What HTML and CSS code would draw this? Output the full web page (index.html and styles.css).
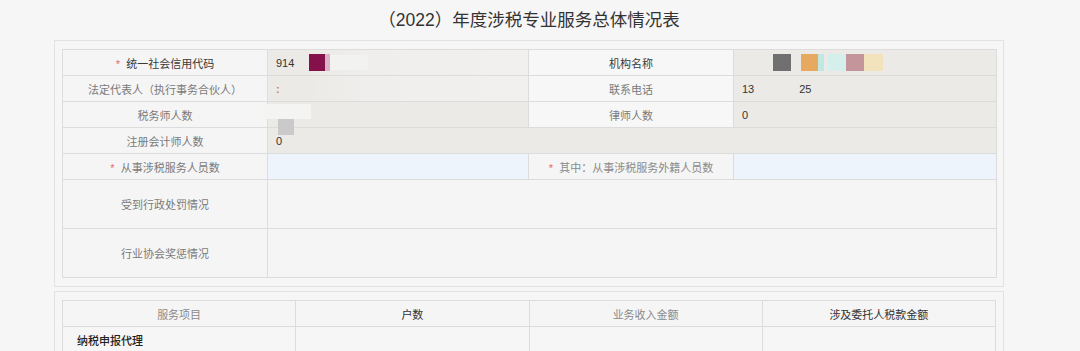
FILE: index.html
```html
<!DOCTYPE html>
<html lang="zh-CN">
<head>
<meta charset="utf-8">
<title>(2022) 年度涉税专业服务总体情况表</title>
<link rel="stylesheet" href="styles.css">
</head>
<body>
<div class="page">
  <h1 class="title">（2022）年度涉税专业服务总体情况表</h1>

  <div class="panel">
    <table class="form">
      <colgroup>
        <col class="c-label"><col class="c-val"><col class="c-label"><col class="c-val2">
      </colgroup>
      <tr class="r-s">
        <td class="lbl dark"><span class="req">*</span>统一社会信用代码</td>
        <td class="val light-a"><span class="num">914</span><span class="blk magenta"></span><span class="blk pinkstripe"></span><span class="blk whiteblur"></span></td>
        <td class="lbl lbl-w dark">机构名称</td>
        <td class="val"><span class="blk b-gray"></span><span class="blk b-orange"></span><span class="blk b-cyan"></span><span class="blk b-lcyan"></span><span class="blk b-pink"></span><span class="blk b-beige"></span></td>
      </tr>
      <tr class="r-s">
        <td class="lbl">法定代表人（执行事务合伙人）</td>
        <td class="val light-a"><span class="colon">:</span></td>
        <td class="lbl lbl-w">联系电话</td>
        <td class="val"><span class="num">13</span><span class="num gap">25</span></td>
      </tr>
      <tr class="r-s">
        <td class="lbl">税务师人数</td>
        <td class="val over"><span class="patch"></span><span class="graymark"></span></td>
        <td class="lbl lbl-w">律师人数</td>
        <td class="val"><span class="num">0</span></td>
      </tr>
      <tr class="r-s">
        <td class="lbl">注册会计师人数</td>
        <td class="val" colspan="3"><span class="num">0</span></td>
      </tr>
      <tr class="r-s">
        <td class="lbl"><span class="req">*</span>从事涉税服务人员数</td>
        <td class="inp"></td>
        <td class="lbl lbl-l"><span class="req">*</span>其中：从事涉税服务外籍人员数</td>
        <td class="inp"></td>
      </tr>
      <tr class="r-l">
        <td class="lbl">受到行政处罚情况</td>
        <td class="area" colspan="3"></td>
      </tr>
      <tr class="r-l">
        <td class="lbl">行业协会奖惩情况</td>
        <td class="area" colspan="3"></td>
      </tr>
    </table>
  </div>

  <div class="panel panel2">
    <table class="svc">
      <tr class="r-s">
        <th class="h-light">服务项目</th>
        <th class="h-dark">户数</th>
        <th class="h-light">业务收入金额</th>
        <th class="h-dark">涉及委托人税款金额</th>
      </tr>
      <tr class="r-s">
        <td class="item">纳税申报代理</td>
        <td></td>
        <td></td>
        <td></td>
      </tr>
    </table>
  </div>
</div>
</body>
</html>
```

FILE: styles.css
```css
html, body {
  margin: 0;
  padding: 0;
  background: #f6f6f6;
}

body {
  font-family: "Liberation Sans", "Noto Sans CJK SC", sans-serif;
  color: #333;
  overflow: hidden;
}

.page {
  width: 950px;
  margin-left: 54px;
}

.title {
  margin: 0;
  height: 40px;
  line-height: 40px;
  font-size: 17.5px;
  font-weight: normal;
  color: #333;
  text-align: center;
}

.panel {
  border: 1px solid #e2e2e2;
  padding: 8px 7px;
  background: #f6f6f6;
}

.panel2 {
  margin-top: 4px;
}

table {
  border-collapse: collapse;
  table-layout: fixed;
  width: 934px;
}

td, th {
  border: 1px solid #dcdcdc;
  padding: 0;
  font-size: 11px;
  font-weight: normal;
  white-space: nowrap;
  overflow: hidden;
}

.c-label { width: 205px; }
.c-val { width: 261px; }
.c-val2 { width: 263px; }

.r-s { height: 26px; }
.r-l { height: 49px; }

.lbl {
  text-align: center;
  color: #7a7a7a;
  background: #f5f5f5;
}

.lbl-w {
  background: #f7f7f7;
}

.lbl-l {
  color: #8a8a8a;
}

.dark {
  color: #3a3a3a;
}

.req {
  color: #e46a6a;
  margin-right: 6px;
}

.val {
  background: #ebeae7;
  padding-left: 8px;
  color: #333;
}

.light-a {
  background: linear-gradient(to right, #ebeae7 0, #ebeae7 40px, #efeeec 100px, #f1f0ee 100%);
}

.over {
  position: relative;
  overflow: visible;
}

.num {
  display: inline-block;
  vertical-align: middle;
}

.gap {
  margin-left: 45px;
}

.colon {
  color: #d07a5a;
  font-weight: bold;
}

.blk {
  display: inline-block;
  vertical-align: middle;
  height: 17px;
}

.magenta {
  width: 16px;
  margin-left: 15px;
  background: #84104c;
}

.pinkstripe {
  width: 5px;
  background: #dcb2c8;
}

.whiteblur {
  width: 38px;
  height: 15px;
  background: #f2f2f1;
}

.b-gray { width: 18px; margin-left: 31px; background: #707070; }
.b-orange { width: 17px; margin-left: 10px; background: #e6a95f; }
.b-cyan { width: 6px; background: #bfe8e2; }
.b-lcyan { width: 18px; margin-left: 4px; background: #d4efec; }
.b-pink { width: 18px; background: #c4959a; }
.b-beige { width: 19px; background: #f2e3bd; }

.patch {
  position: absolute;
  left: -5px;
  top: 2px;
  width: 48px;
  height: 15px;
  background: #f4f4f3;
}

.graymark {
  position: absolute;
  left: 10px;
  top: 17px;
  width: 16px;
  height: 16px;
  background: #cacaca;
  z-index: 1;
}

.inp {
  background: #eef4fc;
}

.area {
  background: #f5f5f5;
}

.svc th {
  background: #f5f5f5;
  text-align: center;
}

.h-light { color: #8a8a8a; }
.h-dark { color: #333; }

.svc td {
  background: #f6f6f6;
}

.svc .item {
  padding-left: 14px;
  color: #222;
  font-weight: 500;
}
```
